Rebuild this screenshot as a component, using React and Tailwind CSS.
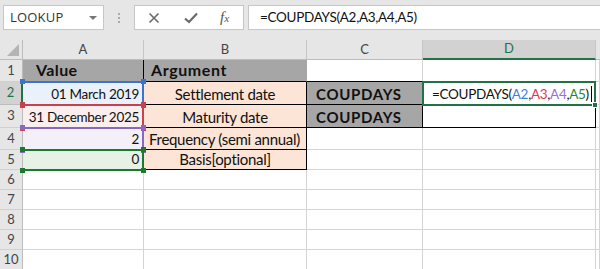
import React from 'react';

const cellFont = { fontFamily: 'Lato, "Liberation Sans", sans-serif' };

function RowHead({ n, active }) {
  return (
    <div
      className={`box-border border-b flex items-center justify-center text-[13px] ${
        active
          ? 'bg-[#d2d2d2] text-[#217346] border-r-2 border-r-[#217346] border-b-[#bcbcbc]'
          : 'bg-[#e6e6e6] text-[#444] border-r border-r-[#bcbcbc] border-b-[#d0d0d0]'
      }`}
    >
      {n}
    </div>
  );
}

function Cell({ className = '', children }) {
  return (
    <div className={`box-border border-r border-b flex items-end overflow-hidden whitespace-nowrap text-[13.5px] tracking-[-0.3px] leading-[18px] pb-[1px] ${className}`}>
      {children}
    </div>
  );
}

function RangeBox({ className, style }) {
  // reference highlight drawn over the cells, with corner handles
  return (
    <div className={`absolute border-t-2 border-b-2 border-r-2 ${className}`} style={style}>
      <span className="absolute -left-[3px] -top-[4px] w-[5px] h-[5px] bg-current" />
      <span className="absolute -right-[4px] -top-[4px] w-[5px] h-[5px] bg-current" />
      <span className="absolute -left-[3px] -bottom-[4px] w-[5px] h-[5px] bg-current" />
      <span className="absolute -right-[4px] -bottom-[4px] w-[5px] h-[5px] bg-current" />
    </div>
  );
}

export default function App() {
  const grid = 'border-[#d4d4d4]';
  const rows = [{ n: 6 }, { n: 7 }, { n: 8 }, { n: 9 }, { n: 10 }];

  return (
    <div className="w-[600px] h-[269px] overflow-hidden bg-white" style={{ fontFamily: '"Open Sans", "Noto Sans", sans-serif' }}>
      {/* Formula bar */}
      <div className="h-[40px] bg-[#e6e6e6] flex items-start pt-[5px] pl-[3px]">
        <div className="w-[101px] h-[25px] box-border bg-white border border-[#c6c6c6] flex items-center justify-between pl-[6px] pr-[6px]">
          <span className="text-[13px] text-[#333] tracking-[0.2px]">LOOKUP</span>
          <span className="w-0 h-0 border-l-[4px] border-r-[4px] border-t-[4px] border-l-transparent border-r-transparent border-t-[#777]" />
        </div>
        <div className="w-[30px] h-[25px] flex flex-col items-center justify-center gap-[2px]">
          <span className="w-[2px] h-[2px] bg-[#aaa]" />
          <span className="w-[2px] h-[2px] bg-[#aaa]" />
          <span className="w-[2px] h-[2px] bg-[#aaa]" />
        </div>
        <div className="w-[110px] h-[25px] box-border bg-white border border-[#c6c6c6] flex items-center pl-[13px]">
          <svg width="12" height="12" viewBox="0 0 12 12" className="mr-[24px]">
            <path d="M1.5 1.5 L10.5 10.5 M10.5 1.5 L1.5 10.5" stroke="#6a6a6a" strokeWidth="1.6" fill="none" />
          </svg>
          <svg width="14" height="12" viewBox="0 0 14 12" className="mr-[22px]">
            <path d="M1 6.5 L5 10 L13 1.5" stroke="#6a6a6a" strokeWidth="2.2" fill="none" />
          </svg>
          <span className="text-[15px] italic text-[#555] leading-none" style={{ fontFamily: '"Liberation Serif", serif' }}>
            f<span className="text-[11px]">x</span>
          </span>
        </div>
        <div className="ml-[4px] flex-1 h-[25px] box-border bg-white border border-r-0 border-[#c6c6c6] flex items-center pl-[11px] text-[13.5px] tracking-[-0.3px] text-[#111]" style={cellFont}>
          =COUPDAYS(A2,A3,A4,A5)
        </div>
      </div>

      {/* Sheet */}
      <div className="relative grid grid-cols-[23px_121px_163px_116px_173px_4px] grid-rows-[20px_22px_23px_23px_22px_20px_20px_20px_20px_20px_20px] text-[#111]" style={cellFont}>
        {/* column headers */}
        <div className="box-border bg-[#e6e6e6] border-r border-b border-[#bcbcbc] relative">
          <span className="absolute left-[7px] bottom-[3px] w-0 h-0" style={{ borderBottom: '12px solid #b4b4b4', borderLeft: '12px solid transparent' }} />
        </div>
        {['A', 'B', 'C'].map((c) => (
          <div key={c} className="box-border bg-[#e6e6e6] border-r border-b border-r-[#c6c6c6] border-b-[#bcbcbc] flex items-center justify-center text-[13px] text-[#444]">
            {c}
          </div>
        ))}
        <div className="box-border bg-[#d2d2d2] border-r border-r-[#c6c6c6] border-b-2 border-b-[#217346] flex items-center justify-center text-[13px] text-[#217346]">
          D
        </div>
        <div className="box-border bg-[#e6e6e6] border-b border-[#bcbcbc]" />

        {/* row 1 */}
        <RowHead n={1} />
        <Cell className="bg-[#a6a6a6] border-r-black border-b-[#a6a6a6] font-bold text-[16px] tracking-[0.4px] pl-[13px] pb-[2px]">Value</Cell>
        <Cell className="bg-[#a6a6a6] border-r-[#a6a6a6] border-b-black font-bold text-[16px] tracking-[0.6px] pl-[7px] pb-[2px]">Argument</Cell>
        <Cell className={grid + ' border-b-black'} />
        <Cell className={grid + ' border-b-black'} />
        <Cell className={grid} />

        {/* row 2 */}
        <RowHead n={2} active />
        <Cell className="bg-[#eaf1fb] border-r-black border-b-[#d4d4d4] justify-end pr-[4px]">01 March 2019</Cell>
        <Cell className="bg-[#fce4d6] border-black justify-center text-[15px] tracking-[-0.1px]">Settlement date</Cell>
        <Cell className="bg-[#a6a6a6] border-black font-bold text-[15px] tracking-[0.7px] pl-[9px]">COUPDAYS</Cell>
        <Cell className="border-r-[#d4d4d4] border-b-black pl-[9px]">
          <span>=COUPDAYS(</span>
          <span className="text-[#3f7fe0]">A2</span>
          <span>,</span>
          <span className="text-[#e0364f]">A3</span>
          <span>,</span>
          <span className="text-[#9a6fd6]">A4</span>
          <span>,</span>
          <span className="text-[#1f8a3a]">A5</span>
          <span>)</span>
          <span className="inline-block w-[1px] h-[16px] bg-black ml-[2px] mb-[1px]" />
        </Cell>
        <Cell className={grid} />

        {/* row 3 */}
        <RowHead n={3} />
        <Cell className="bg-[#fbeeee] border-r-black border-b-[#d4d4d4] justify-end pr-[4px]">31 December 2025</Cell>
        <Cell className="bg-[#fce4d6] border-black justify-center text-[15px] tracking-[-0.1px]">Maturity date</Cell>
        <Cell className="bg-[#a6a6a6] border-black font-bold text-[15px] tracking-[0.7px] pl-[9px]">COUPDAYS</Cell>
        <Cell className="border-black" />
        <Cell className={grid} />

        {/* row 4 */}
        <RowHead n={4} />
        <Cell className="bg-[#f3f0f9] border-r-black border-b-[#d4d4d4] justify-end pr-[4px]">2</Cell>
        <Cell className="bg-[#fce4d6] border-black pl-[5px] text-[15px] tracking-[-0.1px]">Frequency (semi annual)</Cell>
        <Cell className={grid} />
        <Cell className={grid} />
        <Cell className={grid} />

        {/* row 5 */}
        <RowHead n={5} />
        <Cell className="bg-[#e7f2e7] border-r-black border-b-[#d4d4d4] justify-end pr-[4px]">0</Cell>
        <Cell className="bg-[#fce4d6] border-black justify-center text-[15px] tracking-[-0.1px]">Basis[optional]</Cell>
        <Cell className={grid} />
        <Cell className={grid} />
        <Cell className={grid} />

        {rows.map((r) => (
          <React.Fragment key={r.n}>
            <RowHead n={r.n} />
            <Cell className={grid} />
            <Cell className={grid} />
            <Cell className={grid} />
            <Cell className={grid} />
            <Cell className={grid} />
          </React.Fragment>
        ))}

        {/* reference highlights */}
        <RangeBox className="text-[#3b74c9] border-[#3b74c9]" style={{ left: 23, top: 41, width: 121, height: 25 }} />
        <RangeBox className="text-[#c8414f] border-[#c8414f]" style={{ left: 23, top: 64, width: 121, height: 25 }} />
        <RangeBox className="text-[#8a67c0] border-[#8a67c0]" style={{ left: 23, top: 87, width: 121, height: 24 }} />
        <RangeBox className="text-[#1b7a2e] border-[#1b7a2e]" style={{ left: 23, top: 109, width: 121, height: 22 }} />

        {/* active cell D2 */}
        <div className="absolute border-2 border-[#217346]" style={{ left: 422, top: 41, width: 174, height: 25 }}>
          <span className="absolute -right-[4px] -bottom-[4px] w-[6px] h-[6px] bg-[#217346] border border-white" />
        </div>
      </div>
    </div>
  );
}
